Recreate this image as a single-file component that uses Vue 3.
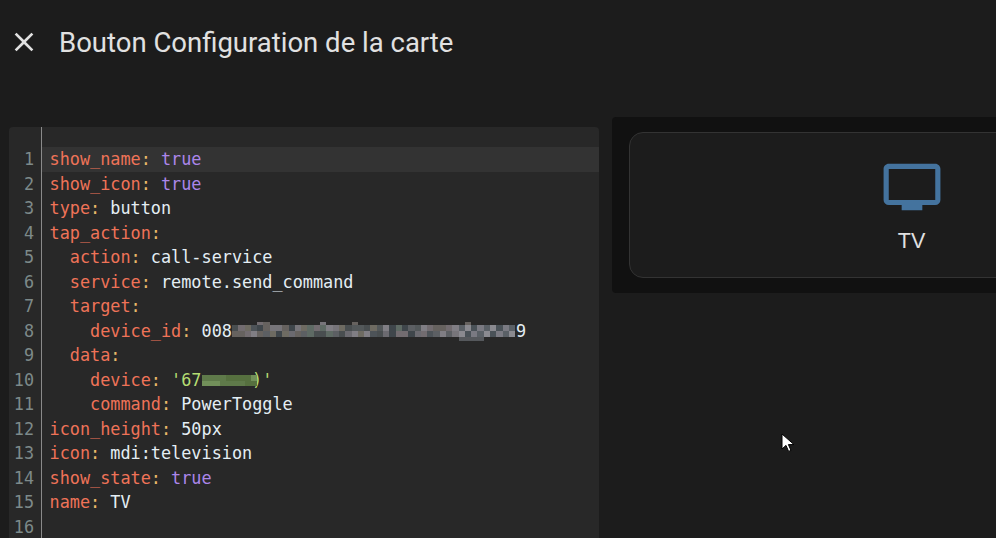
<script setup>
const lines = [
  { indent: 0, key: 'show_name', value: 'true', kind: 'bool', active: true },
  { indent: 0, key: 'show_icon', value: 'true', kind: 'bool' },
  { indent: 0, key: 'type', value: 'button', kind: 'text' },
  { indent: 0, key: 'tap_action' },
  { indent: 1, key: 'action', value: 'call-service', kind: 'text' },
  { indent: 1, key: 'service', value: 'remote.send_command', kind: 'text' },
  { indent: 1, key: 'target' },
  { indent: 2, key: 'device_id', kind: 'id' },
  { indent: 1, key: 'data' },
  { indent: 2, key: 'device', kind: 'str' },
  { indent: 2, key: 'command', value: 'PowerToggle', kind: 'text' },
  { indent: 0, key: 'icon_height', value: '50px', kind: 'text' },
  { indent: 0, key: 'icon', value: 'mdi:television', kind: 'text' },
  { indent: 0, key: 'show_state', value: 'true', kind: 'bool' },
  { indent: 0, key: 'name', value: 'TV', kind: 'text' },
  { indent: 0 }
]
const greys = ['#5c5f63', '#6b6a70', '#4d5358', '#77757a', '#53585a', '#66625f', '#494e50', '#726c70', '#5e6a64', '#3f464b', '#6e6b62', '#807e84']
const COLS = 45
const topCols = [4, 5, 14, 19, 37]
const bottomCols = [36, 37, 38, 39]
const idCells = Array.from({ length: COLS * 4 }, (_, i) => {
  const row = Math.floor(i / COLS)
  const col = i % COLS
  const n = (i * 37 + row * 11 + (i * i) % 13) % greys.length
  if (row === 0) return topCols.includes(col) ? greys[n] : 'transparent'
  if (row === 3) return bottomCols.includes(col) ? '#55585c' : 'transparent'
  if (col >= 36) return ['#7a7a82', '#5a6066', '#8a8a90', '#4a5258'][(col + row) % 4]
  return greys[n]
})
const greens = ['#5f7a4a', '#6c8a50', '#56703f', '#4e6343', '#72905a', '#637d4b']
const strCells = Array.from({ length: 18 }, (_, i) => greens[(i * 5 + (i % 4)) % greens.length])
</script>

<template>
  <div class="page">
    <header class="bar">
      <svg class="close" viewBox="0 0 24 24"><path d="M19 6.41 17.59 5 12 10.59 6.41 5 5 6.41 10.59 12 5 17.59 6.41 19 12 13.41 17.59 19 19 17.59 13.41 12z" /></svg>
      <h1>Bouton Configuration de la carte</h1>
    </header>
    <main class="content">
      <section class="editor">
        <div class="gutter-top"></div>
        <div v-for="(l, i) in lines" :key="i" class="row" :class="{ active: l.active }">
          <span class="num">{{ i + 1 }}</span>
          <code class="code"><span class="ind">{{ '  '.repeat(l.indent) }}</span><template v-if="l.key"><span class="k">{{ l.key }}</span><span class="c">:</span></template><template v-if="l.value"><span class="sp">{{ ' ' }}</span><span :class="l.kind">{{ l.value }}</span></template><template v-if="l.kind === 'id'"><span class="sp">{{ ' ' }}</span><span class="text">008</span><span class="mosaic id"><i v-for="(c, j) in idCells" :key="j" :style="{ background: c }"></i></span><span class="text">9</span></template><template v-if="l.kind === 'str'"><span class="sp">{{ ' ' }}</span><span class="str">'67</span><span class="mosaic sm"><i v-for="(c, j) in strCells" :key="j" :style="{ background: c }"></i></span><span class="str">)'</span></template></code>
        </div>
      </section>
      <aside class="preview">
        <div class="card">
          <svg class="tv" viewBox="0 0 24 24"><path d="M21 17H3V5h18m0-2H3c-1.11 0-2 .89-2 2v12a2 2 0 0 0 2 2h5v2h8v-2h5a2 2 0 0 0 2-2V5c0-1.11-.9-2-2-2z" /></svg>
          <div class="name">TV</div>
        </div>
      </aside>
    </main>
    <svg class="cursor" viewBox="0 0 14 20"><path d="M1 1v15l4-3.6 2.6 6 2.4-1-2.6-5.8H13z" /></svg>
  </div>
</template>

<style>
html, body { margin: 0; background: #1c1c1c; overflow: hidden; }
</style>

<style scoped>
.page { position: relative; width: 996px; height: 538px; overflow: hidden; background: #1c1c1c; }
.bar { display: flex; align-items: center; height: 84px; padding: 1px 0 0 8px; box-sizing: border-box; }
.close { width: 32px; height: 32px; fill: #e1e1e1; flex: none; margin-top: -1px; }
h1 { margin: 0 0 0 19px; font: 400 27.5px/32px Roboto, sans-serif; color: #e1e1e1; white-space: nowrap; }
.content { display: flex; align-items: flex-start; padding: 33px 0 0 9px; width: 1300px; }
.editor { width: 590px; height: 421px; margin-top: 10px; background: #282828; border-radius: 4px 4px 0 0; flex: none; }
.gutter-top { height: 20px; margin-left: 32px; border-left: 1px solid #8a8a8a; }
.row { display: flex; height: 24.5px; }
.num { width: 32px; box-sizing: border-box; padding-right: 7px; text-align: right; font: 16.8px/24.5px "DejaVu Sans Mono", monospace; color: #7d8a8a; flex: none; }
.code { flex: 1; padding-left: 7.5px; border-left: 1px solid #8a8a8a; font: 16.83px/24.5px "DejaVu Sans Mono", monospace; color: #e1e1e1; white-space: pre; }
.active .code { background: #333; }
.k { color: #ef7358; }
.c { color: #e8b96a; }
.bool { color: #ab86ea; }
.text { color: #e4eef4; }
.str { color: #b5dd73; }
.mosaic { display: inline-grid; vertical-align: top; position: relative; }
.mosaic i { display: block; }
.mosaic.id { grid-template-columns: repeat(45, 6.31px); grid-template-rows: 3px 6px 6px 4px; width: 284px; height: 19px; margin-top: 3.5px; }
.mosaic.sm { grid-template-columns: repeat(9, 6.17px); grid-auto-rows: 5.5px; width: 55.6px; height: 11px; margin: 7.5px -5px 0 0; }
.preview { margin-left: 13px; padding: 15px 17px; background: #111; border-radius: 4px; flex: none; width: 599px; box-sizing: border-box; height: 176px; }
.card { height: 146px; box-sizing: border-box; border: 1px solid #333; border-radius: 14px; background: #1c1c1c; display: flex; flex-direction: column; align-items: center; padding-top: 22.75px; }
.tv { width: 62px; height: 62px; fill: #44739e; }
.name { margin-top: 11.25px; font: 500 21.5px/24px "Liberation Sans", sans-serif; color: #e1e1e1; }
.cursor { position: absolute; left: 781px; top: 433px; width: 14px; height: 20px; fill: #fff; stroke: #000; stroke-width: 1; }
</style>
